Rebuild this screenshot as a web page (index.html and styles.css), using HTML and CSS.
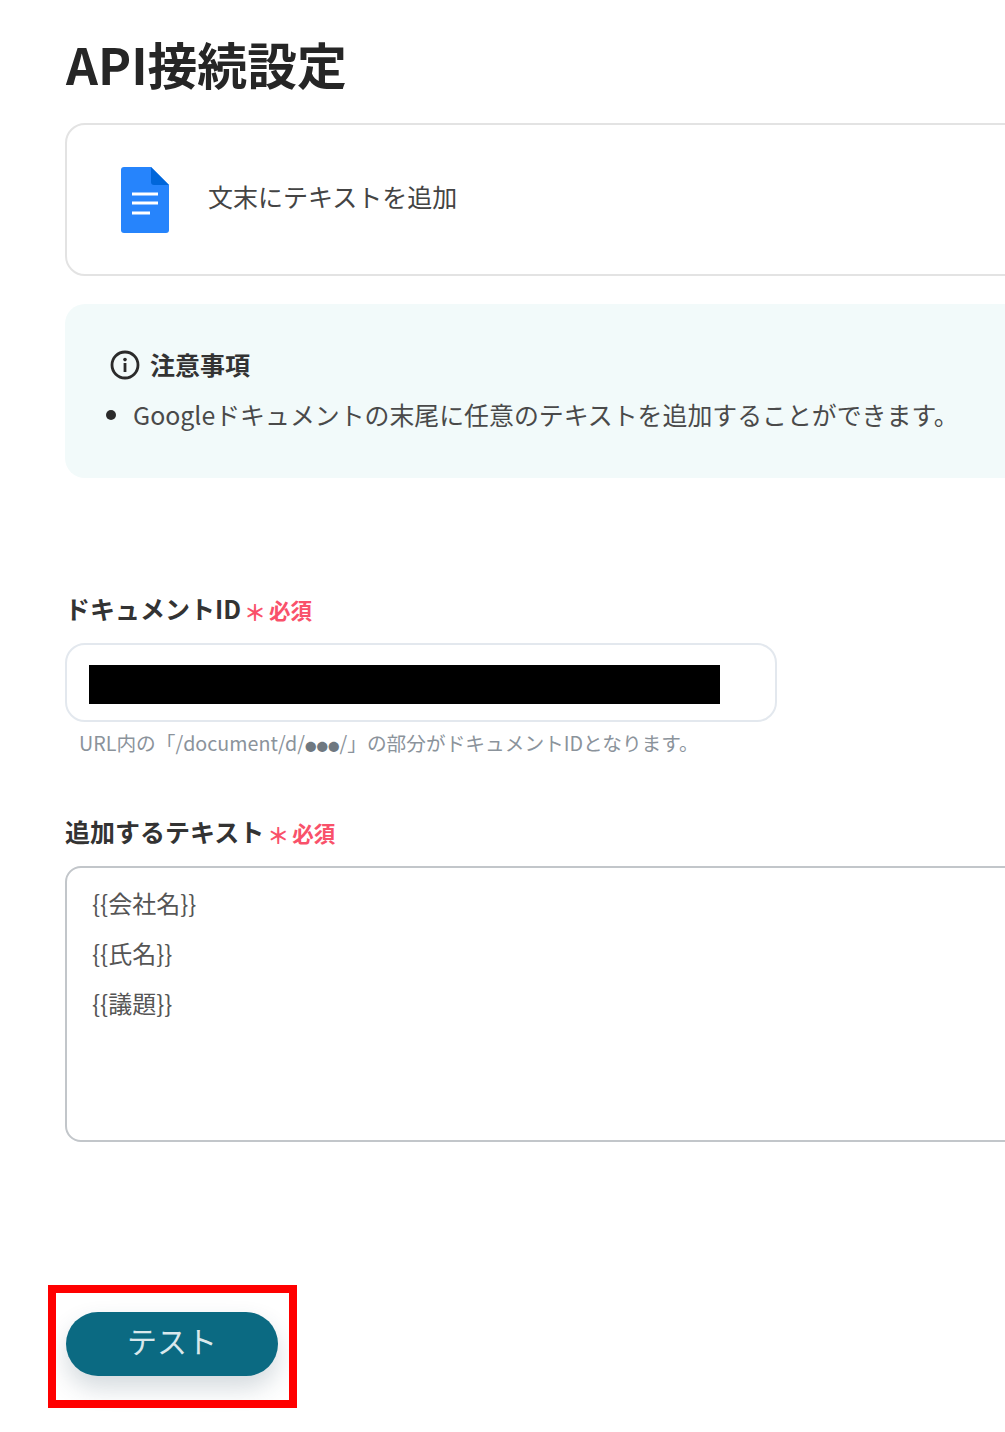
FILE: index.html
```html
<!DOCTYPE html>
<html lang="ja">
<head>
    <meta charset="UTF-8">
    <meta name="viewport" content="width=device-width, initial-scale=1.0">
    <title>API接続設定</title>
    <link rel="stylesheet" href="styles.css">
</head>
<body>

<div class="page">
    <h1 class="title">API接続設定</h1>

    <div class="action-card">
        <svg class="doc-icon" viewBox="0 0 48 66" width="48" height="66">
            <path d="M3 0H30L48 18V63a3 3 0 0 1-3 3H3a3 3 0 0 1-3-3V3a3 3 0 0 1 3-3z" fill="#2684fc"/>
            <path d="M30 0L48 18H33a3 3 0 0 1-3-3z" fill="#0066da"/>
            <path d="M11 27H37M11 36H37M11 46H29" stroke="#fff" stroke-width="3" fill="none"/>
        </svg>
        <span class="action-name">文末にテキストを追加</span>
    </div>

    <div class="note">
        <div class="note-head">
            <svg class="info-icon" viewBox="0 0 30 30" width="30" height="30">
                <circle cx="15" cy="15" r="13" fill="none" stroke="#2b2b2b" stroke-width="2.8"/>
                <circle cx="15" cy="9.6" r="1.8" fill="#2b2b2b"/>
                <rect x="13.6" y="13" width="2.8" height="9" fill="#2b2b2b"/>
            </svg>
            <span class="note-title">注意事項</span>
        </div>
        <ul class="note-list">
            <li>Googleドキュメントの末尾に任意のテキストを追加することができます。</li>
        </ul>
    </div>

    <div class="field field-id">
        <label class="field-label">ドキュメントID<span class="required"><span class="star">＊</span>必須</span></label>
        <div class="id-input"><span class="redacted"></span></div>
        <p class="help">URL内の「/document/d/<span class="dots">●●●</span>/」の部分がドキュメントIDとなります。</p>
    </div>

    <div class="field field-text">
        <label class="field-label">追加するテキスト<span class="required"><span class="star">＊</span>必須</span></label>
        <div class="text-input">
            <div>{{会社名}}</div>
            <div>{{氏名}}</div>
            <div>{{議題}}</div>
        </div>
    </div>

    <div class="actions">
        <button class="test-btn" type="button">テスト</button>
        <div class="highlight"></div>
    </div>
</div>

</body>
</html>
```

FILE: styles.css
```css
* {
    box-sizing: border-box;
}
body {
    margin: 0;
    background-color: #fff;
    font-family: "Noto Sans CJK JP", "Noto Sans", sans-serif;
    color: #333;
}
.page {
    width: 1005px;
    height: 1432px;
    padding: 29px 0 0 65px;
    overflow: hidden;
}
.title {
    margin: 0 0 0 1px;
    height: 68px;
    font-size: 49.8px;
    line-height: 68px;
    font-weight: 700;
    color: #262626;
    white-space: nowrap;
}
.action-card {
    display: flex;
    align-items: center;
    gap: 39px;
    width: 1100px;
    height: 153px;
    margin-top: 26px;
    padding-left: 54px;
    background-color: #fff;
    border: 2px solid #e3e3e3;
    border-radius: 20px;
}
.action-name {
    padding-bottom: 7px;
    font-size: 25px;
    color: #444;
}
.note {
    width: 1100px;
    height: 174px;
    margin-top: 28px;
    padding: 43px 0 0 45px;
    background-color: #f2fafa;
    border-radius: 20px;
}
.note-head {
    display: flex;
    align-items: center;
    gap: 10px;
    height: 36px;
    font-size: 25px;
    font-weight: 700;
    color: #333;
}
.note-title {
    padding-bottom: 2px;
}
.note-list {
    margin: 13px 0 0;
    padding: 0 0 0 23px;
    font-size: 24.9px;
    line-height: 36px;
    color: #4a4a4a;
    white-space: nowrap;
}
.note-list li::marker {
    font-size: 27px;
    color: #2b2b2b;
}
.field-id {
    margin-top: 112px;
}
.field-text {
    margin-top: 51px;
}
.field-label {
    display: block;
    height: 36px;
    font-size: 25px;
    line-height: 36px;
    font-weight: 700;
    color: #333;
}
.required {
    font-size: 21.5px;
    font-weight: 700;
    color: #f9516a;
}
.star {
    display: inline-block;
    width: 28px;
    font-size: 22px;
    line-height: 20px;
    font-weight: 700;
    text-align: center;
    vertical-align: -2px;
}
.id-input {
    width: 712px;
    height: 79px;
    margin-top: 17px;
    padding: 20px 0 0 22px;
    background-color: #fff;
    border: 2px solid #e3e8ee;
    border-radius: 20px;
}
.redacted {
    display: block;
    width: 631px;
    height: 39px;
    background-color: #000;
}
.help {
    margin: 5px 0 0 14px;
    font-size: 19.7px;
    line-height: 32px;
    color: #8b939b;
    white-space: nowrap;
}
.dots {
    font-size: 11.5px;
    color: #6f7880;
}
.text-input {
    width: 1100px;
    height: 276px;
    margin-top: 17px;
    padding: 10px 0 0 25px;
    background-color: #fff;
    border: 2px solid #c2c6ca;
    border-radius: 16px;
    font-size: 24px;
    line-height: 50px;
    color: #555;
}
.actions {
    position: relative;
    margin-top: 170px;
}
.test-btn {
    display: block;
    width: 212px;
    height: 64px;
    margin-left: 1px;
    padding: 0 0 8px;
    background-color: #0b6a82;
    color: #d9e8ec;
    border: none;
    border-radius: 33px;
    font-family: inherit;
    font-size: 30px;
    box-shadow: 0 12px 24px rgba(40, 70, 90, 0.2);
    cursor: pointer;
}
.highlight {
    position: absolute;
    left: -17px;
    top: -27px;
    width: 249px;
    height: 123px;
    border: 8px solid #f00;
}
```
